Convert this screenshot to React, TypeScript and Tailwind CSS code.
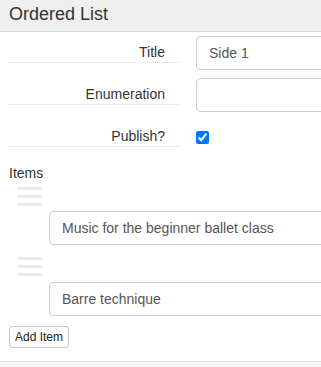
import React from "react";

function Handle() {
  return (
    <div className="ml-[17px] flex w-[25px] flex-col gap-[5px]">
      <div className="h-[3px] bg-[#ebebeb]" />
      <div className="h-[3px] bg-[#ebebeb]" />
      <div className="h-[3px] bg-[#ebebeb]" />
    </div>
  );
}

function Row({ label, children }: { label: string; children: React.ReactNode }) {
  return (
    <div className="flex h-[34px] items-start">
      <div className="ml-[9px] w-[171px] shrink-0 border-b border-dotted border-[#d8d8d8] pt-[7px] pr-[15px] text-right text-[14px] leading-[19px] text-[#333]">
        {label}
      </div>
      <div className="ml-[16px] flex h-[34px] min-w-0 flex-1 items-center">{children}</div>
    </div>
  );
}

function TextBox({ value }: { value: string }) {
  return (
    <div className="h-[34px] w-[400px] shrink-0 rounded-[4px] border border-[#ccc] bg-white px-[12px] text-[14px] leading-[32px] text-[#555]">
      {value}
    </div>
  );
}

export default function App() {
  return (
    <div
      className="h-[367px] w-[321px] overflow-hidden bg-[#f5f5f5]"
      style={{ fontFamily: '"Liberation Sans", Arial, sans-serif' }}
    >
      <div className="border-b border-[#e0e0e0] bg-white">
        <div className="h-[32px] border-b border-[#dcdcdc] bg-[#efefef] pl-[9px] pt-[2px] text-[18px] leading-[24px] text-[#333]">
          Ordered List
        </div>
        <div className="flex flex-col gap-[8px] pt-[4px]">
          <Row label="Title">
            <TextBox value="Side 1" />
          </Row>
          <Row label="Enumeration">
            <TextBox value="" />
          </Row>
          <Row label="Publish?">
            <input type="checkbox" defaultChecked className="m-0 h-[13px] w-[13px]" />
          </Row>
        </div>
        <div className="mt-[9px] pl-[9px] text-[14px] leading-[20px] text-[#333]">Items</div>
        <div className="mt-[4px]">
          <Handle />
          <div className="ml-[49px] mt-[5px] overflow-hidden">
            <TextBox value="Music for the beginner ballet class" />
          </div>
          <div className="mt-[12px]">
            <Handle />
          </div>
          <div className="ml-[49px] mt-[6px] overflow-hidden">
            <TextBox value="Barre technique" />
          </div>
        </div>
        <div className="pl-[9px] pt-[8px] pb-[13px]">
          <button className="h-[22px] rounded-[3px] border border-[#c8c8c8] bg-white px-[5px] text-[12px] leading-[20px] text-[#222]">
            Add Item
          </button>
        </div>
      </div>
    </div>
  );
}
